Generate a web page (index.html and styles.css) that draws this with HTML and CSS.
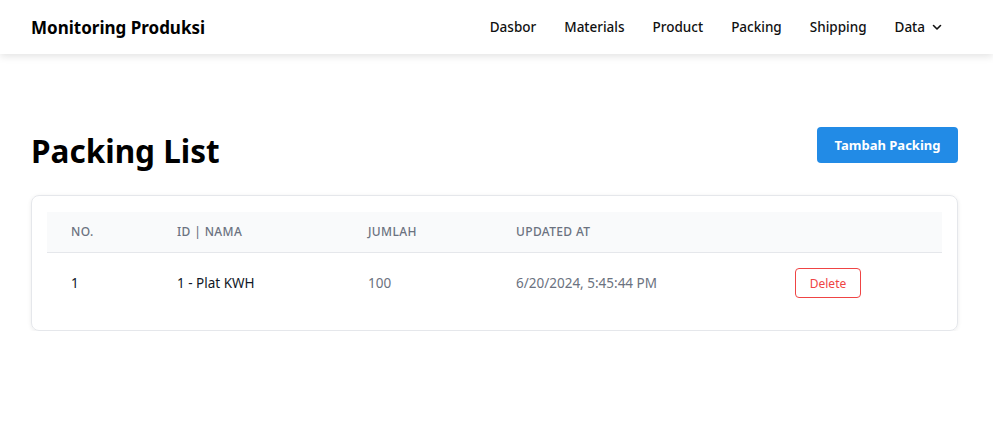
FILE: index.html
```html
<!DOCTYPE html>
<html lang="id">
<head>
<meta charset="utf-8">
<title>Monitoring Produksi</title>
<link rel="stylesheet" href="styles.css">
</head>
<body>
<header class="navbar">
  <div class="brand">Monitoring Produksi</div>
  <nav class="menu">
    <a class="menu-item" href="#">Dasbor</a>
    <a class="menu-item" href="#">Materials</a>
    <a class="menu-item" href="#">Product</a>
    <a class="menu-item" href="#">Packing</a>
    <a class="menu-item" href="#">Shipping</a>
    <a class="menu-item dropdown" href="#">Data
      <svg class="chev" width="12" height="12" viewBox="0 0 12 12"><path d="M2.5 4.5 L6 8 L9.5 4.5" fill="none" stroke="#111" stroke-width="1.6" stroke-linecap="round" stroke-linejoin="round"/></svg>
    </a>
  </nav>
</header>
<main class="content">
  <div class="page-head">
    <h1 class="page-title">Packing List</h1>
    <button class="btn-primary">Tambah Packing</button>
  </div>
  <div class="card">
    <table class="table">
      <thead>
        <tr>
          <th class="c1">No.</th>
          <th class="c2">ID | Nama</th>
          <th class="c3">Jumlah</th>
          <th class="c4">Updated At</th>
          <th class="c5"></th>
        </tr>
      </thead>
      <tbody>
        <tr>
          <td class="strong">1</td>
          <td class="strong">1 - Plat KWH</td>
          <td class="muted">100</td>
          <td class="muted">6/20/2024, 5:45:44 PM</td>
          <td><button class="btn-delete">Delete</button></td>
        </tr>
      </tbody>
    </table>
  </div>
</main>
</body>
</html>
```
FILE: styles.css
```css
* { box-sizing: border-box; }
html, body { margin: 0; padding: 0; background: #fff; }
body { font-family: "Noto Sans", "Open Sans", sans-serif; color: #111; }

.navbar {
  height: 54px;
  display: flex;
  align-items: center;
  justify-content: space-between;
  padding: 0 50px 0 31px;
  background: #fff;
  box-shadow: 0 2px 8px rgba(0,0,0,0.12);
}
.brand { font-size: 17px; font-weight: 700; color: #000; }
.menu { display: flex; align-items: center; gap: 28px; }
.menu-item {
  font-size: 13.5px;
  font-weight: 500;
  color: #111;
  text-decoration: none;
  display: flex;
  align-items: center;
  gap: 6px;
}
.chev { display: block; }

.content { padding: 73px 35px 0 31px; }
.page-head {
  display: flex;
  justify-content: space-between;
  align-items: center;
  height: 48px;
  margin-bottom: 20px;
}
.page-title { margin: 0; font-size: 31.5px; font-weight: 700; color: #000; line-height: 48px; }
.btn-primary {
  font-family: inherit;
  height: 36px;
  width: 141px;
  border: none;
  border-radius: 4px;
  background: #228be6;
  color: #fff;
  font-size: 13px;
  font-weight: 700;
  margin-top: -12px;
}

.card {
  border: 1px solid #e5e7eb;
  border-radius: 8px;
  padding: 16px 15px;
  box-shadow: 0 1px 4px rgba(0,0,0,0.08);
}
.table { width: 100%; border-collapse: collapse; }
.table th {
  background: #f9fafb;
  height: 40px;
  text-align: left;
  font-size: 12px;
  font-weight: 500;
  color: #6b7280;
  text-transform: uppercase;
  letter-spacing: 0.03em;
  padding: 0 24px;
  border-bottom: 1px solid #e5e7eb;
}
.c1 { width: 106px; }
.c2 { width: 191px; }
.c3 { width: 148px; }
.c4 { width: 279px; }
.table td { height: 62px; padding: 0 24px; font-size: 13.5px; }
.strong { color: #111827; font-weight: 400; }
.muted { color: #6b7280; }
.btn-delete {
  font-family: inherit;
  height: 30px;
  width: 66px;
  border: 1px solid #ef4444;
  border-radius: 4px;
  background: #fff;
  color: #ef4444;
  font-size: 12px;
}
```
